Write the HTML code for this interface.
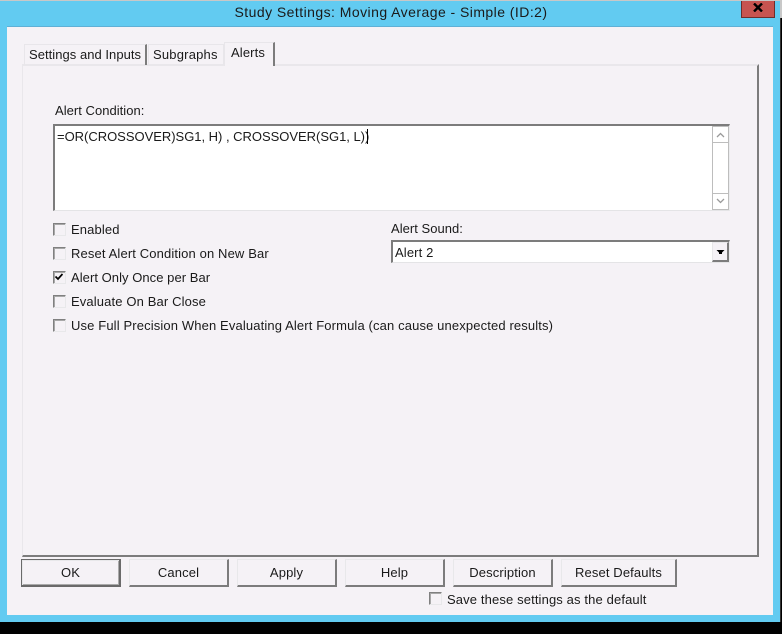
<!DOCTYPE html>
<html><head><meta charset="utf-8"><style>
html,body{margin:0;padding:0;background:#000}
#p{position:relative;width:782px;height:634px;overflow:hidden;background:#000;font-family:"Liberation Sans",sans-serif;font-size:13px;color:#1a1a1a}
#p div{position:absolute;box-sizing:border-box}
.t{white-space:nowrap;line-height:16px;height:16px;letter-spacing:.13px}
.btn{top:559px;height:28px;background:#f5f2f6;border:solid;border-color:#e8e8ea #7c7c7c #7c7c7c #e8e8ea;border-width:1px 2px 2px 1px;text-align:center;line-height:25px;white-space:nowrap;letter-spacing:.13px}
.cb{width:13px;height:13px;background:#f5f2f6;border:1px solid;border-color:#808080 #e8e8ea #e8e8ea #808080;box-shadow:inset 1px 1px 0 #a8a8a8}
</style></head><body><div id="p">
<div style="left:0;top:0;width:782px;height:1px;background:#c8c8c8"></div>
<div style="left:0;top:1px;width:780px;height:621px;background:#62cbf1"></div>
<div style="left:780px;top:0;width:2px;height:18px;background:#c8c8c8"></div>
<div style="left:780px;top:18px;width:1px;height:604px;background:#333"></div>
<div style="left:781px;top:18px;width:1px;height:604px;background:#000"></div>
<div style="left:7px;top:26px;width:766px;height:1px;background:#5fb0d6"></div>
<div style="left:7px;top:27px;width:766px;height:588px;background:#f5f2f6"></div>
<div class="t" style="left:0;top:4px;width:782px;text-align:center;font-size:14px;letter-spacing:.45px">Study Settings: Moving Average - Simple (ID:2)</div>
<div style="left:741px;top:1px;width:34px;height:17px;background:#c75450;border:solid #6d2e2c;border-width:0 1px 1px 1px"></div>
<svg style="position:absolute;left:753px;top:3px" width="10" height="9" viewBox="0 0 10 9"><path d="M1 .5L9 8.500M9 .5L1 8.500" stroke="#000" stroke-width="2.400" fill="none"/></svg>

<!-- panel -->
<div style="left:22px;top:64px;width:737px;height:493px;border:solid;border-color:#e9e7eb #7c7c7c #7c7c7c #e9e7eb;border-width:2px 2px 2px 1px"></div>
<!-- tabs -->
<div style="left:24px;top:44px;width:123px;height:21px;border:solid;border-color:#e8e6ea #7c7c7c #f5f2f6 #e8e6ea;border-width:1px 2px 0 1px"></div>
<div class="t" style="left:29px;top:47px;letter-spacing:.04px">Settings and Inputs</div>
<div style="left:148px;top:44px;width:76px;height:21px;border:solid #e8e6ea;border-width:1px 1px 0 1px"></div>
<div class="t" style="left:153px;top:47px;letter-spacing:.2px">Subgraphs</div>
<div style="left:224px;top:42px;width:51px;height:24px;background:#f5f2f6;border:solid;border-color:#e8e6ea #7c7c7c #f5f2f6 #e8e6ea;border-width:1px 2px 0 1px"></div>
<div class="t" style="left:231px;top:45px">Alerts</div>

<div class="t" style="left:55px;top:103px;letter-spacing:.03px">Alert Condition:</div>
<!-- edit -->
<div style="left:53px;top:124px;width:677px;height:87px;background:#fff;border:solid;border-color:#7c7c7c #ececee #e4e4e6 #7c7c7c;border-width:2px 1px 1px 2px"></div>
<div class="t" style="left:57px;top:129px;letter-spacing:-.02px">=OR(CROSSOVER)SG1, H) , CROSSOVER(SG1, L))</div>
<div style="left:367px;top:129px;width:1px;height:15px;background:#000"></div>
<div style="left:712px;top:126px;width:17px;height:84px;background:#fff;border:1px solid #bdbdbd"></div>
<div style="left:712px;top:142px;width:17px;height:1px;background:#bdbdbd"></div>
<div style="left:712px;top:193px;width:17px;height:1px;background:#bdbdbd"></div>
<svg style="position:absolute;left:716px;top:131px" width="9" height="8" viewBox="0 0 9 8"><path d="M1 6L4.500 2.500L8 6" stroke="#9a9a9a" stroke-width="1.300" fill="none"/></svg>
<svg style="position:absolute;left:716px;top:197px" width="9" height="8" viewBox="0 0 9 8"><path d="M1 2L4.500 5.500L8 2" stroke="#9a9a9a" stroke-width="1.300" fill="none"/></svg>

<!-- checks -->
<div class="cb" style="left:53px;top:223px"></div><div class="t" style="left:71px;top:222px">Enabled</div>
<div class="cb" style="left:53px;top:247px"></div><div class="t" style="left:71px;top:246px">Reset Alert Condition on New Bar</div>
<div class="cb" style="left:53px;top:271px"></div><div class="t" style="left:71px;top:270px;letter-spacing:.05px">Alert Only Once per Bar</div>
<svg style="position:absolute;left:55px;top:273px" width="8" height="8" viewBox="0 0 8 8"><path d="M.5 3.500L3 6L7.500 1" stroke="#000" stroke-width="1.700" fill="none"/></svg>
<div class="cb" style="left:53px;top:295px"></div><div class="t" style="left:71px;top:294px">Evaluate On Bar Close</div>
<div class="cb" style="left:53px;top:319px"></div><div class="t" style="left:71px;top:318px">Use Full Precision When Evaluating Alert Formula (can cause unexpected results)</div>

<!-- combo -->
<div class="t" style="left:391px;top:221px;letter-spacing:.03px">Alert Sound:</div>
<div style="left:391px;top:240px;width:339px;height:23px;background:#fff;border:solid;border-color:#7c7c7c #ececee #e4e4e6 #7c7c7c;border-width:2px 1px 1px 2px"></div>
<div class="t" style="left:395px;top:245px">Alert 2</div>
<div style="left:712px;top:242px;width:17px;height:20px;background:#f5f2f6;border:solid;border-color:#e8e8ea #7c7c7c #7c7c7c #e8e8ea;border-width:1px 2px 2px 1px"></div>
<svg style="position:absolute;left:716px;top:249px" width="9" height="6" viewBox="0 0 9 6"><path d="M.5 1H8.500L6 3.500V5H3V3.500Z" fill="#000"/></svg>

<!-- buttons -->
<div class="btn" style="left:21px;width:100px;border:solid #6a6a6a;border-width:1px 2px 2px 1px;box-shadow:inset 1px 1px 0 #e8e8ea,inset -1px -1px 0 #aaa">OK</div>
<div class="btn" style="left:129px;width:100px">Cancel</div>
<div class="btn" style="left:237px;width:100px">Apply</div>
<div class="btn" style="left:345px;width:100px">Help</div>
<div class="btn" style="left:453px;width:100px">Description</div>
<div class="btn" style="left:561px;width:116px">Reset Defaults</div>

<div class="cb" style="left:429px;top:592px"></div>
<div class="t" style="left:447px;top:592px">Save these settings as the default</div>
</div></body></html>
